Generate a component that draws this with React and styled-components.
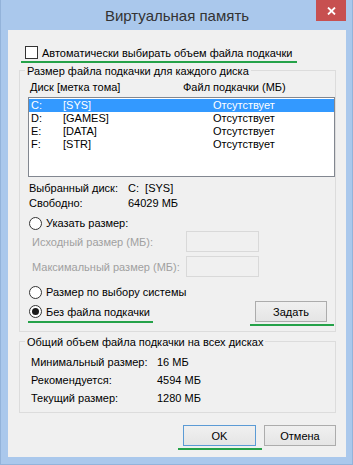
import styled, { createGlobalStyle } from 'styled-components'

const GlobalStyle = createGlobalStyle`
  html, body {
    margin: 0;
    padding: 0;
    background: #ffffff;
  }
  body {
    font-family: 'Liberation Sans', Arial, sans-serif;
    font-size: 11px;
    color: #000000;
    white-space: nowrap;
  }
`

const Window = styled.div`
  width: 353px;
  height: 465px;
  box-sizing: border-box;
  background: #aac8ec;
  border: 1px solid #93b3da;
  border-top: none;
  padding: 0 6px 7px 7px;
  display: flex;
  flex-direction: column;
`

const TitleBar = styled.div`
  flex-shrink: 0;
  height: 30px;
  display: grid;
  grid-template-columns: 1fr auto 1fr;
  align-items: center;
`

const Title = styled.div`
  grid-column: 2;
  font-size: 15px;
  color: #333333;
  padding-top: 1px;
`

const CloseButton = styled.div`
  grid-column: 3;
  justify-self: end;
  align-self: start;
  width: 30px;
  height: 21px;
  background: #c75050;
  display: flex;
  align-items: center;
  justify-content: center;
`

const Client = styled.div`
  flex: 1;
  min-height: 0;
  overflow: hidden;
  background: #f0f0f0;
  display: flex;
  flex-direction: column;
  padding: 0 10px 0 11px;
`

// green annotation line drawn under a control
const Marked = styled.div`
  position: relative;
  display: flex;
  align-items: center;
  &::after {
    content: '';
    display: ${(p) => (p.$width ? 'block' : 'none')};
    position: absolute;
    left: ${(p) => p.$left || 0}px;
    top: ${(p) => p.$lineTop || 0}px;
    width: ${(p) => p.$width || 0}px;
    height: 2px;
    background: #25a249;
  }
`

const CheckRow = styled(Marked)`
  margin: 16px 0 0 6px;
  height: 13px;
  gap: 4px;
  align-self: flex-start;
`

const CheckBox = styled.span`
  width: 13px;
  height: 13px;
  box-sizing: border-box;
  border: 1px solid #333333;
  background: #ffffff;
`

const GroupBox = styled.div`
  margin-top: ${(p) => p.$mt}px;
  border: 1px solid #dcdcdc;
  padding: 0 0 ${(p) => p.$pb}px 8px;
  display: flex;
  flex-direction: column;
`

const GroupTitle = styled.div`
  align-self: flex-start;
  margin: -8px 0 0 -3px;
  padding: 0 2px;
  line-height: 16px;
  background: #f0f0f0;
`

const HeaderRow = styled.div`
  display: grid;
  grid-template-columns: 153px 1fr;
  padding-left: 2px;
  margin-top: 1px;
  line-height: 14px;
`

const ListBox = styled.div`
  margin-top: 3px;
  height: 80px;
  box-sizing: border-box;
  border: 1px solid #828790;
  background: #ffffff;
  padding: 1px 0;
`

const DiskRow = styled.div`
  display: grid;
  grid-template-columns: 32px 150px 1fr;
  height: 13px;
  line-height: 13px;
  padding-left: 2px;
  background: ${(p) => (p.$selected ? '#3399ff' : 'transparent')};
  color: ${(p) => (p.$selected ? '#ffffff' : '#000000')};
`

const InfoRow = styled.div`
  display: grid;
  grid-template-columns: 99px auto;
  padding-left: 1px;
  line-height: 15px;
  margin-top: ${(p) => p.$mt || 0}px;
`

const RadioRow = styled(Marked)`
  height: 16px;
  gap: 4px;
  padding-left: 1px;
  margin-top: ${(p) => p.$mt || 0}px;
  align-self: flex-start;
`

const Radio = styled.span`
  width: 13px;
  height: 13px;
  box-sizing: border-box;
  border: 1px solid #333333;
  border-radius: 50%;
  background: #ffffff;
  display: flex;
  align-items: center;
  justify-content: center;
  &::after {
    content: '';
    display: ${(p) => (p.$checked ? 'block' : 'none')};
    width: 7px;
    height: 7px;
    border-radius: 50%;
    background: #1a1a1a;
  }
`

const SizeRow = styled.div`
  display: flex;
  align-items: center;
  height: 21px;
  padding-left: 4px;
  margin-top: ${(p) => p.$mt || 0}px;
  color: #a0a0a0;
`

const SizeLabel = styled.span`
  width: 154px;
`

const TextBox = styled.span`
  width: 73px;
  height: 21px;
  box-sizing: border-box;
  border: 1px solid #d9d9d9;
  background: #f0f0f0;
`

const ActionRow = styled.div`
  display: flex;
  align-items: center;
  justify-content: space-between;
  height: 21px;
  margin-top: 1px;
  padding-right: 8px;

  & > ${RadioRow} {
    align-self: center;
  }
`

const Button = styled.div`
  width: ${(p) => p.$width || 73}px;
  height: 21px;
  box-sizing: border-box;
  border: 1px solid ${(p) => (p.$focused ? '#5b9bd5' : '#acacac')};
  background: linear-gradient(#f0f0f0, #e5e5e5);
  display: flex;
  align-items: center;
  justify-content: center;
`

const SummaryRow = styled.div`
  display: grid;
  grid-template-columns: 126px auto;
  padding-left: 3px;
  line-height: 18px;
  margin-top: ${(p) => p.$mt || 0}px;
`

const Footer = styled.div`
  display: flex;
  justify-content: flex-end;
  gap: 8px;
  margin-top: 12px;
`

const disks = [
  { letter: 'C:', label: '[SYS]', size: 'Отсутствует' },
  { letter: 'D:', label: '[GAMES]', size: 'Отсутствует' },
  { letter: 'E:', label: '[DATA]', size: 'Отсутствует' },
  { letter: 'F:', label: '[STR]', size: 'Отсутствует' },
]

const totals = [
  { label: 'Минимальный размер:', value: '16 МБ' },
  { label: 'Рекомендуется:', value: '4594 МБ' },
  { label: 'Текущий размер:', value: '1280 МБ' },
]

function App() {
  return (
    <>
      <GlobalStyle />
      <Window>
        <TitleBar>
          <Title>Виртуальная память</Title>
          <CloseButton>
            <svg width="9" height="8" viewBox="0 0 9 8">
              <path d="M1 0.5 L8 7.5 M8 0.5 L1 7.5" stroke="#ffffff" strokeWidth="1.8" />
            </svg>
          </CloseButton>
        </TitleBar>
        <Client>
          <CheckRow $left={-4} $lineTop={15} $width={276}>
            <CheckBox />
            <span>Автоматически выбирать объем файла подкачки</span>
          </CheckRow>

          <GroupBox $mt={11} $pb={9}>
            <GroupTitle>Размер файла подкачки для каждого диска</GroupTitle>
            <HeaderRow>
              <span>Диск [метка тома]</span>
              <span>Файл подкачки (МБ)</span>
            </HeaderRow>
            <ListBox>
              {disks.map((disk, index) => (
                <DiskRow key={disk.letter} $selected={index === 0}>
                  <span>{disk.letter}</span>
                  <span>{disk.label}</span>
                  <span>{disk.size}</span>
                </DiskRow>
              ))}
            </ListBox>
            <InfoRow $mt={4}>
              <span>Выбранный диск:</span>
              <span>C:&nbsp;&nbsp;[SYS]</span>
            </InfoRow>
            <InfoRow>
              <span>Свободно:</span>
              <span>64029 МБ</span>
            </InfoRow>
            <RadioRow $mt={4}>
              <Radio />
              <span>Указать размер:</span>
            </RadioRow>
            <SizeRow>
              <SizeLabel>Исходный размер (МБ):</SizeLabel>
              <TextBox />
            </SizeRow>
            <SizeRow $mt={4}>
              <SizeLabel>Максимальный размер (МБ):</SizeLabel>
              <TextBox />
            </SizeRow>
            <RadioRow $mt={7}>
              <Radio />
              <span>Размер по выбору системы</span>
            </RadioRow>
            <ActionRow>
              <RadioRow $left={0} $lineTop={17} $width={125}>
                <Radio $checked />
                <span>Без файла подкачки</span>
              </RadioRow>
              <Marked $left={-5} $lineTop={23} $width={84}>
                <Button $width={72}>Задать</Button>
              </Marked>
            </ActionRow>
          </GroupBox>

          <GroupBox $mt={9} $pb={5}>
            <GroupTitle>Общий объем файла подкачки на всех дисках</GroupTitle>
            {totals.map((row, index) => (
              <SummaryRow key={row.label} $mt={index === 0 ? 3 : 0}>
                <span>{row.label}</span>
                <span>{row.value}</span>
              </SummaryRow>
            ))}
          </GroupBox>

          <Footer>
            <Marked $left={-5} $lineTop={23} $width={84}>
              <Button $focused>OK</Button>
            </Marked>
            <Button $width={72}>Отмена</Button>
          </Footer>
        </Client>
      </Window>
    </>
  )
}

export default App
